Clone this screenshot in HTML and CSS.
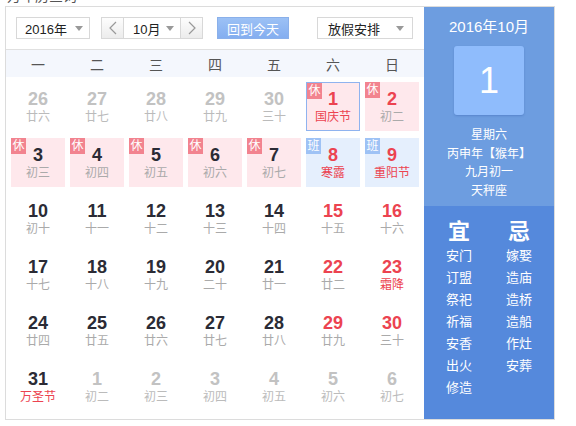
FILE: index.html
```html
<!DOCTYPE html>
<html lang="zh-CN">
<head>
<meta charset="utf-8">
<link rel="stylesheet" href="styles.css">
</head>
<body>
<div class="cut"><span>万年历查询</span></div>
<div class="cal">
  <div class="main">
    <div class="toolbar">
      <div class="sel year"><span>2016年</span><i class="tri"></i></div>
      <div class="mgroup">
        <div class="nav"><svg width="8" height="14" viewBox="0 0 8 14"><path d="M7 1 L1 7 L7 13" fill="none" stroke="#999" stroke-width="1.2"/></svg></div>
        <div class="sel month"><span>10月</span><i class="tri"></i></div>
        <div class="nav"><svg width="8" height="14" viewBox="0 0 8 14"><path d="M1 1 L7 7 L1 13" fill="none" stroke="#999" stroke-width="1.2"/></svg></div>
      </div>
      <div class="today">回到今天</div>
      <div class="sel holiday"><span>放假安排</span><i class="tri"></i></div>
    </div>
    <div class="weekdays">
      <span>一</span><span>二</span><span>三</span><span>四</span><span>五</span><span>六</span><span>日</span>
    </div>
    <div class="grid">
      <div class="day other"><b>26</b><em>廿六</em></div>
      <div class="day other"><b>27</b><em>廿七</em></div>
      <div class="day other"><b>28</b><em>廿八</em></div>
      <div class="day other"><b>29</b><em>廿九</em></div>
      <div class="day other"><b>30</b><em>三十</em></div>
      <div class="day rest wk sel-day fest"><i class="tag">休</i><b>1</b><em>国庆节</em></div>
      <div class="day rest wk"><i class="tag">休</i><b>2</b><em>初二</em></div>

      <div class="day rest"><i class="tag">休</i><b>3</b><em>初三</em></div>
      <div class="day rest"><i class="tag">休</i><b>4</b><em>初四</em></div>
      <div class="day rest"><i class="tag">休</i><b>5</b><em>初五</em></div>
      <div class="day rest"><i class="tag">休</i><b>6</b><em>初六</em></div>
      <div class="day rest"><i class="tag">休</i><b>7</b><em>初七</em></div>
      <div class="day work wk fest"><i class="tag">班</i><b>8</b><em>寒露</em></div>
      <div class="day work wk fest"><i class="tag">班</i><b>9</b><em>重阳节</em></div>

      <div class="day"><b>10</b><em>初十</em></div>
      <div class="day"><b>11</b><em>十一</em></div>
      <div class="day"><b>12</b><em>十二</em></div>
      <div class="day"><b>13</b><em>十三</em></div>
      <div class="day"><b>14</b><em>十四</em></div>
      <div class="day wk"><b>15</b><em>十五</em></div>
      <div class="day wk"><b>16</b><em>十六</em></div>

      <div class="day"><b>17</b><em>十七</em></div>
      <div class="day"><b>18</b><em>十八</em></div>
      <div class="day"><b>19</b><em>十九</em></div>
      <div class="day"><b>20</b><em>二十</em></div>
      <div class="day"><b>21</b><em>廿一</em></div>
      <div class="day wk"><b>22</b><em>廿二</em></div>
      <div class="day wk fest"><b>23</b><em>霜降</em></div>

      <div class="day"><b>24</b><em>廿四</em></div>
      <div class="day"><b>25</b><em>廿五</em></div>
      <div class="day"><b>26</b><em>廿六</em></div>
      <div class="day"><b>27</b><em>廿七</em></div>
      <div class="day"><b>28</b><em>廿八</em></div>
      <div class="day wk"><b>29</b><em>廿九</em></div>
      <div class="day wk"><b>30</b><em>三十</em></div>

      <div class="day fest"><b>31</b><em>万圣节</em></div>
      <div class="day other"><b>1</b><em>初二</em></div>
      <div class="day other"><b>2</b><em>初三</em></div>
      <div class="day other"><b>3</b><em>初四</em></div>
      <div class="day other"><b>4</b><em>初五</em></div>
      <div class="day other"><b>5</b><em>初六</em></div>
      <div class="day other"><b>6</b><em>初七</em></div>
    </div>
  </div>
  <div class="side">
    <div class="side-top">
      <div class="ym">2016年10月</div>
      <div class="big">1</div>
      <div class="info">
        <div>星期六</div>
        <div>丙申年【猴年】</div>
        <div>九月初一</div>
        <div>天秤座</div>
      </div>
    </div>
    <div class="side-bottom">
      <div class="col">
        <div class="hd">宜</div>
        <div>安门</div><div>订盟</div><div>祭祀</div><div>祈福</div><div>安香</div><div>出火</div><div>修造</div>
      </div>
      <div class="col">
        <div class="hd">忌</div>
        <div>嫁娶</div><div>造庙</div><div>造桥</div><div>造船</div><div>作灶</div><div>安葬</div>
      </div>
    </div>
  </div>
</div>
</body>
</html>
```
FILE: styles.css
```css
* { box-sizing: border-box; }
html, body { margin: 0; padding: 0; background: #fff; overflow: hidden; }
body {
  width: 576px; height: 426px;
  font-family: "Liberation Sans", "Noto Sans CJK SC", sans-serif;
  color: #333;
}
.cut {
  height: 3px;
  overflow: hidden;
  font-size: 14px;
  line-height: 14px;
  padding-left: 7px;
  color: #555;
}
.cut span { display: block; margin-top: -11px; }
.cal {
  margin: 3px 0 0 5px;
  width: 550px;
  height: 414px;
  border: 1px solid #dcdcdc;
  display: flex;
}
.main { width: 418px; display: flex; flex-direction: column; }
.toolbar {
  height: 43px;
  border-bottom: 1px solid #e0e0e0;
  display: flex;
  align-items: flex-start;
  padding: 10px 0 0 10px;
}
.sel {
  height: 22px;
  border: 1px solid #d8d8d8;
  background: #fff;
  display: flex;
  align-items: center;
  justify-content: space-between;
  font-size: 13px;
  color: #222;
  padding: 0 6px 0 8px;
}
.tri {
  width: 0; height: 0;
  border-left: 4px solid transparent;
  border-right: 4px solid transparent;
  border-top: 5px solid #999;
}
.year { width: 74px; }
.mgroup {
  margin-left: 11px;
  display: flex;
  height: 22px;
  border: 1px solid #d8d8d8;
}
.mgroup .sel { height: 20px; border: none; border-left: 1px solid #d8d8d8; border-right: 1px solid #d8d8d8; width: 58px; padding-left: 9px; }
.nav {
  width: 21px;
  height: 20px;
  background: linear-gradient(#fdfdfd, #ececec);
  display: flex;
  align-items: center;
  justify-content: center;
}
.today {
  margin-left: 14px;
  width: 72px;
  height: 22px;
  background: linear-gradient(#9cc1f5, #84aef0);
  border: 1px solid #8ab0ea;
  color: #fff;
  font-size: 13px;
  display: flex;
  align-items: center;
  justify-content: center;
}
.holiday { margin-left: 28px; width: 96px; padding-left: 10px; padding-right: 8px; }
.weekdays {
  height: 27px;
  background: #f4f7fd;
  display: grid;
  grid-template-columns: repeat(7, 54px);
  column-gap: 5px;
  padding: 0 5px;
  align-items: center;
  font-size: 14px;
  color: #555;
}
.weekdays span { text-align: center; }
.grid {
  display: grid;
  grid-template-columns: repeat(7, 54px);
  grid-template-rows: repeat(6, 49px);
  column-gap: 5px;
  row-gap: 7px;
  padding: 5px 5px 0 5px;
}
.day {
  position: relative;
  text-align: center;
  padding-top: 7px;
}
.day b {
  display: block;
  font-size: 18px;
  line-height: 20px;
  font-weight: bold;
  color: #2b2b35;
}
.day em {
  display: block;
  font-style: normal;
  font-size: 12px;
  line-height: 16px;
  color: #aaa;
}
.day.wk b { color: #ec4350; }
.day.fest em { color: #ec4350; }
.day.other b { color: #c2c2c2; }
.day.other em { color: #bbb; }
.day.rest { background: #fee8ec; }
.day.work { background: #e5effd; }
.day.sel-day { border: 1px solid #8fb3ef; padding-top: 6px; }
.tag {
  position: absolute;
  left: 0; top: 0;
  width: 15px; height: 16px;
  font-style: normal;
  font-size: 12px;
  line-height: 16px;
  color: #fff;
  text-align: center;
  background: #f2838f;
}
.work .tag { background: #9ec2f5; }
.side { width: 130px; display: flex; flex-direction: column; color: #fff; }
.side-top {
  height: 199px;
  background: #6d9de0;
  display: flex;
  flex-direction: column;
  align-items: center;
  padding-top: 11px;
}
.ym { font-size: 15px; line-height: 18px; }
.big {
  margin-top: 10px;
  width: 70px; height: 69px;
  background: #8fbcfc;
  border-radius: 3px;
  box-shadow: 0 1px 2px rgba(40,80,160,0.3);
  font-size: 36px;
  line-height: 69px;
  text-align: center;
}
.info { margin-top: 11px; font-size: 12px; line-height: 18.7px; text-align: center; }
.side-bottom {
  flex: 1;
  background: #5589dc;
  display: flex;
  padding: 13px 5px 0 5px;
}
.col { width: 60px; text-align: center; font-size: 13px; line-height: 22px; }
.col .hd { font-size: 22px; line-height: 26px; font-weight: bold; margin-bottom: 0; }
```
